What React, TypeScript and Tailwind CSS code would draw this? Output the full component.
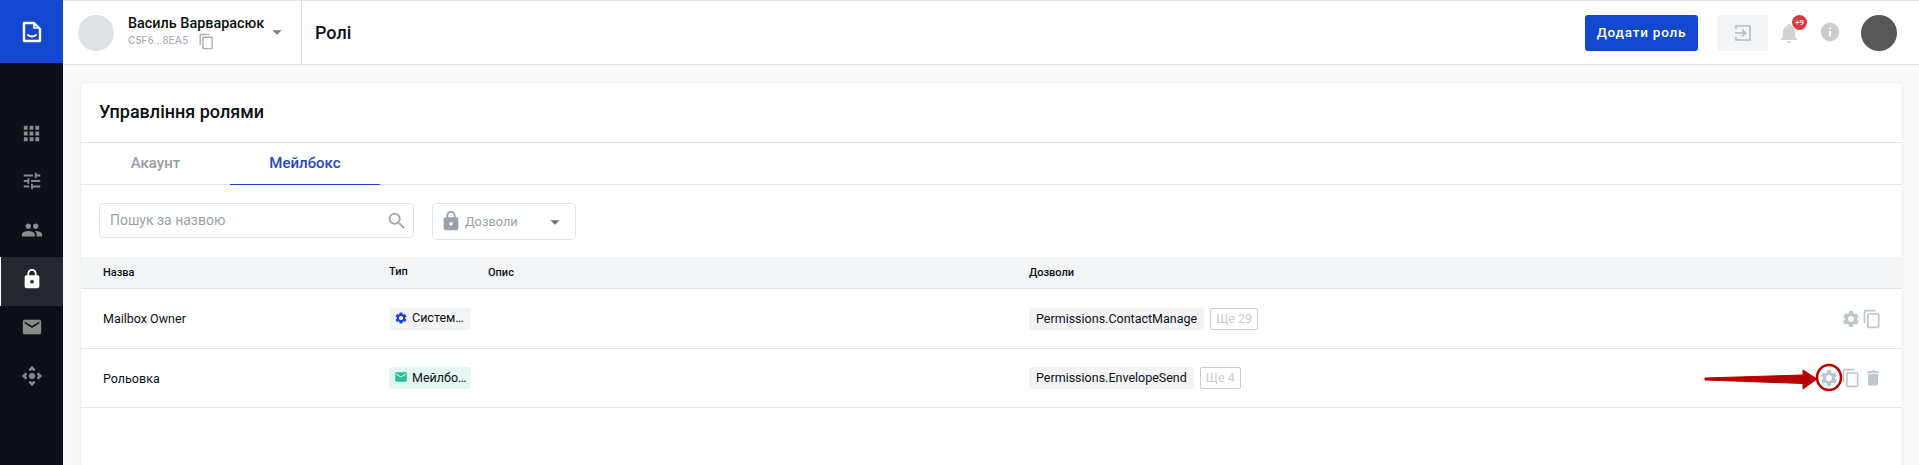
import React from "react";
import {
  MdApps, MdTune, MdPeople, MdLock, MdEmail, MdControlCamera, MdContentCopy, MdArrowDropDown,
  MdNotifications, MdInfo, MdSearch, MdSettings, MdDelete,
} from "react-icons/md";

function Logo() {
  return (
    <svg width="20" height="22" viewBox="0 0 20 22" fill="none" stroke="#fff" strokeWidth="2.4">
      <path d="M2 2h10l6 6v12H2z" strokeLinejoin="round" />
      <path d="M12 2v5h6" strokeWidth="1.6" />
      <path d="M6 14c2 2 6 2 8 0" strokeWidth="1.8" strokeLinecap="round" />
    </svg>
  );
}

function Sidebar() {
  const cls = "text-[#8b8b8b]";
  return (
    <aside className="w-[63px] shrink-0 bg-[#0d1117] flex flex-col">
      <div className="h-[63px] bg-[#1447cf] flex items-center justify-center">
        <Logo />
      </div>
      <div className="mt-[46px] flex flex-col">
        <div className="h-[48px] flex items-center justify-center"><MdApps size={23} className={cls} /></div>
        <div className="h-[48px] flex items-center justify-center"><MdTune size={22} className={cls} /></div>
        <div className="h-[50px] flex items-center justify-center"><MdPeople size={22} className={cls} /></div>
        <div className="mt-[2px] h-[49px] pb-[6px] flex items-center justify-center bg-[#24282e] border-l border-white">
          <MdLock size={22} className="text-white" />
        </div>
        <div className="h-[42px] flex items-center justify-center"><MdEmail size={22} className={cls} /></div>
        <div className="h-[56px] flex items-center justify-center"><MdControlCamera size={24} className={cls} /></div>
      </div>
    </aside>
  );
}

function Header() {
  return (
    <header className="h-[65px] shrink-0 bg-white border-t border-b border-[#e0e3e7] flex items-center">
      <div className="w-[239px] h-full border-r border-[#e0e3e7] flex items-center pl-[15px]">
        <div className="w-9 h-9 rounded-full bg-[#dfe1e4] shrink-0" />
        <div className="ml-[14px] flex flex-col">
          <span className="text-[14.4px] leading-[18px] font-medium text-[#0b0f14] whitespace-nowrap">Василь Варварасюк</span>
          <div className="flex items-center h-[17px]">
            <span className="text-[11px] text-[#a3a9b1]">C5F6...8EA5</span>
            <MdContentCopy size={17} className="ml-[10px] -mt-[1px] text-[#a9afb7]" />
          </div>
        </div>
        <MdArrowDropDown size={22} className="ml-[2px] -mt-[2px] text-[#7b7b7b]" />
      </div>
      <div className="ml-[13px] text-[18px] font-medium text-[#0b0f14]">Ролі</div>
      <div className="ml-auto flex items-center pr-[22px]">
        <button className="w-[113px] h-9 rounded-[3px] bg-[#1447cf] text-white text-[13.5px] font-medium tracking-[0.8px]">Додати роль</button>
        <div className="ml-[19px] w-[51px] h-9 rounded-[3px] bg-[#f3f4f6] flex items-center justify-center">
          <svg width="18" height="18" viewBox="0 0 18 18" fill="none" stroke="#b4bac2" strokeWidth="1.6">
            <path d="M2 5V2h14v14H2v-3" />
            <path d="M1 9h10M8 5.5 11.5 9 8 12.5" />
          </svg>
        </div>
        <div className="relative ml-[9px] w-6 h-6 flex items-center justify-center">
          <MdNotifications size={24} className="text-[#d0d2d5]" />
          <span className="absolute -top-[6px] left-[15px] w-[15px] h-[15px] rounded-full bg-[#e0383e] text-white text-[8px] leading-[15px] font-medium text-center">+9</span>
        </div>
        <MdInfo size={22} className="ml-[18px] -mt-[1px] text-[#cbcccd]" />
        <div className="ml-[20px] w-9 h-9 rounded-full bg-[#585858]" />
      </div>
    </header>
  );
}

function Row({ h, name, tag, perm, more, last }: { h: string; name: string; tag: React.ReactNode; perm: string; more: string; last: React.ReactNode }) {
  return (
    <div className={`${h} border-b border-[#e3e5e8] flex items-center text-[#0b0f14] text-[12.5px]`}>
      <div className="w-[308px] pl-[22px] pt-[2px] shrink-0">{name}</div>
      <div className="w-[640px] shrink-0">{tag}</div>
      <div className="flex items-center">
        <span className="h-[22px] px-[7px] rounded-[3px] bg-[#f3f3f4] leading-[22px]">{perm}</span>
        <span className="ml-[6px] h-[22px] px-[5px] rounded-[2px] border border-[#c9ced4] text-[#c9ccd0] leading-[20px]">{more}</span>
      </div>
      <div className="ml-auto">{last}</div>
    </div>
  );
}

function Tag({ bg, icon, text }: { bg: string; icon: React.ReactNode; text: string }) {
  return (
    <span className={`w-[82px] h-[22px] rounded-[3px] flex items-center pl-[5px] text-[12.5px] ${bg}`}>
      {icon}
      <span className="ml-[4px]">{text}</span>
    </span>
  );
}

function Arrow() {
  return (
    <svg className="absolute left-[1700px] top-[360px]" width="145" height="36" viewBox="0 0 145 36" fill="none">
      <path d="M5 18 L 103 15 L 103 10 L 117 19 L 103 29 L 103 23.5 L 5 20 Z" fill="#b70000" stroke="#b70000" strokeLinejoin="round" />
      <ellipse cx="129" cy="17.5" rx="12" ry="12.5" stroke="#b70000" strokeWidth="2.5" />
    </svg>
  );
}

export default function App() {
  return (
    <div className="relative w-[1919px] h-[465px] overflow-hidden flex font-['Roboto',sans-serif] bg-[#f9f9f9]">
      <Sidebar />
      <div className="flex-1 flex flex-col min-w-0">
        <Header />
        <main className="flex-1 pt-[18px] pl-[18px] pr-[17px] overflow-hidden">
          <div className="h-[420px] bg-white rounded-t-[4px] shadow-[0_0_2px_rgba(0,0,0,0.12)]">
            <div className="h-[60px] pb-[2px] border-b border-[#e3e5e8] flex items-center pl-[18px] text-[18px] font-medium text-[#0b0f14]">Управління ролями</div>
            <div className="h-[42px] border-b border-[#e3e5e8] flex text-[15px] font-medium">
              <div className="w-[149px] flex items-center justify-center text-[#989ca3]">Акаунт</div>
              <div className="w-[150px] flex items-center justify-center text-[#1f47c9] border-b border-[#1447cf] h-[42px]">Мейлбокс</div>
            </div>
            <div className="h-[72px] flex items-start pt-[18px] pl-[18px]">
              <div className="w-[315px] h-[35px] rounded-[4px] border border-[#e0e3e7] flex items-center pl-[10px] pr-[5px] text-[14px] text-[#9b9fa5]">
                <span>Пошук за назвою</span>
                <MdSearch size={22} className="ml-auto text-[#a3a7ac]" />
              </div>
              <div className="ml-[18px] w-[144px] h-[37px] rounded-[4px] border border-[#e0e3e7] flex items-center pl-[7px] pr-[9px] text-[12.8px] text-[#9b9fa5]">
                <MdLock size={22} className="-mt-[2px] text-[#9ba1aa]" />
                <span className="ml-[3px]">Дозволи</span>
                <MdArrowDropDown size={22} className="ml-auto text-[#6f6f6f]" />
              </div>
            </div>
            <div className="h-[32px] pt-[1px] bg-[#f3f4f6] border-b border-[#dfe1e4] flex items-center text-[11px] font-medium text-[#0b0f14]">
              <div className="w-[308px] pl-[22px] shrink-0">Назва</div>
              <div className="w-[99px] shrink-0 -mt-[2px]">Тип</div>
              <div className="w-[541px] shrink-0">Опис</div>
              <div>Дозволи</div>
            </div>
            <Row
              h="h-[60px]"
              name="Mailbox Owner"
              perm="Permissions.ContactManage"
              more="Ще 29"
              tag={<Tag bg="bg-[#f3f4f6]" text="Систем…" icon={<MdSettings size={14} className="-mt-[2px] text-[#2541d3]" />} />}
              last={<div className="flex items-center pr-[20px] text-[#bfc5cd]"><MdSettings size={20} /><MdContentCopy size={20} className="ml-[1px]" /></div>}
            />
            <Row
              h="h-[59px]"
              name="Рольовка"
              perm="Permissions.EnvelopeSend"
              more="Ще 4"
              tag={<Tag bg="bg-[#e3f7f3]" text="Мейлбо…" icon={<MdEmail size={14} className="-mt-[2px] text-[#2dbd9f]" />} />}
              last={<div className="flex items-center gap-[2px] pr-[19px] text-[#bfc5cd]"><MdSettings size={20} /><MdContentCopy size={20} /><MdDelete size={20} /></div>}
            />
          </div>
        </main>
      </div>
      <Arrow />
    </div>
  );
}
